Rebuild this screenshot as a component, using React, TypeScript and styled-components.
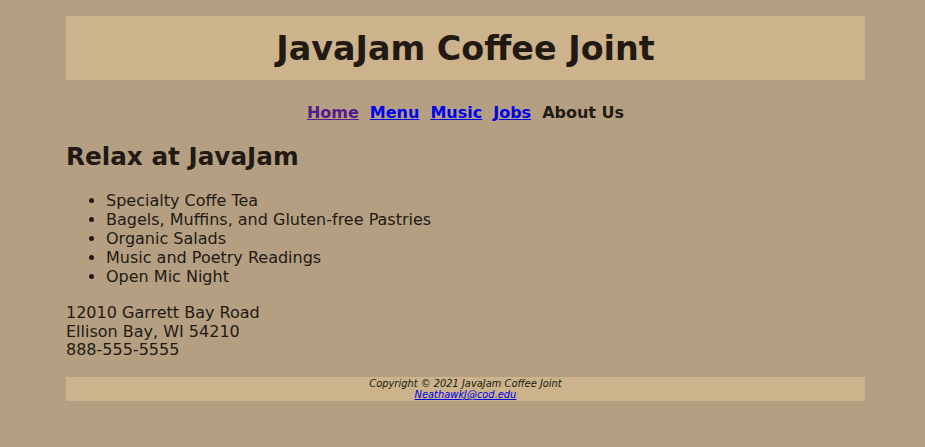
import React from "react";
import styled, { createGlobalStyle } from "styled-components";

const GlobalStyle = createGlobalStyle`
  body {
    margin: 0;
    background-color: #b59f82;
    color: #221a12;
    font-family: "DejaVu Sans", Verdana, sans-serif;
  }
`;

const Wrapper = styled.div`
  width: 799px;
  margin: 16px 0 0 66px;
`;

const Header = styled.header`
  background-color: #ccb38b;
  height: 64px;
  display: flex;
  align-items: center;
  justify-content: center;

  h1 {
    margin: 0;
    font-size: 33.4px;
    font-weight: bold;
  }
`;

const Nav = styled.nav`
  margin-top: 22px;
  text-align: center;
  font-size: 16px;
  font-weight: bold;
  line-height: 21px;

  a {
    color: #0000ee;
    margin-right: 11px;
  }
  a.visited {
    color: #551a8b;
  }
`;

const Main = styled.main`
  h2 {
    margin: 20px 0 0;
    font-size: 24.7px;
    line-height: 28px;
  }
`;

const List = styled.ul`
  margin: 20px 0 0;
  padding-left: 40px;
  font-size: 16px;
  line-height: 19px;
`;

const Address = styled.p`
  margin: 18px 0 0;
  font-size: 16px;
  line-height: 18.5px;
`;

const Footer = styled.footer`
  margin-top: 17px;
  background-color: #ccb38b;
  height: 24px;
  text-align: center;
  font-size: 9.9px;
  font-style: italic;
  line-height: 11.5px;
  padding-top: 1px;
  box-sizing: border-box;

  a {
    color: #0000ee;
  }
`;

const items = [
  "Specialty Coffe Tea",
  "Bagels, Muffins, and Gluten-free Pastries",
  "Organic Salads",
  "Music and Poetry Readings",
  "Open Mic Night",
];

const App = () => (
  <>
    <GlobalStyle />
    <Wrapper>
      <Header>
        <h1>JavaJam Coffee Joint</h1>
      </Header>
      <Nav>
        <a href="#" className="visited">Home</a>
        <a href="#">Menu</a>
        <a href="#">Music</a>
        <a href="#">Jobs</a>
        <span>About Us</span>
      </Nav>
      <Main>
        <h2>Relax at JavaJam</h2>
        <List>
          {items.map((item, index) => (
            <li key={index}>{item}</li>
          ))}
        </List>
        <Address>
          12010 Garrett Bay Road
          <br />
          Ellison Bay, WI 54210
          <br />
          888-555-5555
        </Address>
      </Main>
      <Footer>
        Copyright &copy; 2021 JavaJam Coffee Joint
        <br />
        <a href="#">NeathawkJ@cod.edu</a>
      </Footer>
    </Wrapper>
  </>
);

export default App;
